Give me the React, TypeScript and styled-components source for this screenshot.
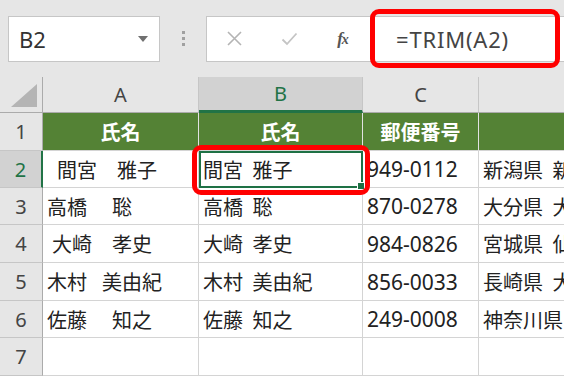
import React from 'react'
import styled, { createGlobalStyle, css } from 'styled-components'

const GlobalStyle = createGlobalStyle`
  body {
    margin: 0;
    background: #ffffff;
    font-family: "Noto Sans CJK JP", "Noto Sans", sans-serif;
    overflow: hidden;
  }
`

const Page = styled.div`
  width: 564px;
  height: 376px;
  overflow: hidden;
  background: #e6e6e6;
`

const Toolbar = styled.div`
  height: 77px;
  display: flex;
  align-items: center;
  padding-left: 8px;
  box-sizing: border-box;
`

const NameBox = styled.div`
  width: 152px;
  height: 46px;
  box-sizing: border-box;
  border: 1px solid #c6c6c6;
  background: #fff;
  display: flex;
  align-items: center;
  justify-content: space-between;
  padding: 0 11px 0 10px;
  font-family: "Noto Sans", sans-serif;
  font-size: 22px;
  color: #333;
`

const Caret = styled.span`
  width: 0;
  height: 0;
  border-left: 5px solid transparent;
  border-right: 5px solid transparent;
  border-top: 6px solid #707070;
`

const Grip = styled.div`
  width: 46px;
  display: flex;
  flex-direction: column;
  align-items: center;
  gap: 3px;
`

const GripDot = styled.span`
  width: 3px;
  height: 3px;
  background: #a0a0a0;
`

const FormulaBar = styled.div`
  flex: 1;
  height: 46px;
  box-sizing: border-box;
  border: 1px solid #c6c6c6;
  border-right: none;
  background: #fff;
  display: flex;
  align-items: center;
`

const BarButton = styled.div`
  width: 55px;
  height: 100%;
  display: flex;
  align-items: center;
  justify-content: center;
`

const Fx = styled.span`
  font-family: "Liberation Serif", serif;
  font-style: italic;
  font-weight: bold;
  font-size: 17px;
  color: #555;
  letter-spacing: -1px;
  margin-right: 4px;

  small {
    font-size: 14px;
  }
`

const FormulaInput = styled.div`
  position: relative;
  flex: 1;
  height: 100%;
  display: flex;
  align-items: center;
  padding-left: 24px;
  font-family: "Noto Sans", sans-serif;
  font-size: 22px;
  letter-spacing: 0.8px;
  color: #444;
`

const Highlight = styled.div<{ $top: number; $left: number; $w: number; $h: number }>`
  position: absolute;
  top: ${p => p.$top}px;
  left: ${p => p.$left}px;
  width: ${p => p.$w}px;
  height: ${p => p.$h}px;
  box-sizing: border-box;
  border: 5px solid #ff0000;
  border-radius: 9px;
  z-index: 5;
  pointer-events: none;
`

const Sheet = styled.div`
  display: grid;
  grid-template-columns: 43px 156px 164px 116px 260px;
  grid-template-rows: 36px 38px 37px 37px 38px 38px 37px 38px;
  background: #fff;
`

const Corner = styled.div`
  background: #e6e6e6;
  border-right: 1px solid #ababab;
  border-bottom: 1px solid #ababab;
  display: flex;
  align-items: flex-end;
  justify-content: flex-end;
  padding: 0 5px 5px 0;
`

const ColHeader = styled.div<{ $selected?: boolean }>`
  background: #e6e6e6;
  border-right: 1px solid #c6c6c6;
  border-bottom: 1px solid #ababab;
  display: flex;
  align-items: center;
  justify-content: center;
  font-size: 20px;
  color: #444;
  font-family: "Noto Sans", sans-serif;
  ${p =>
    p.$selected &&
    css`
      background: #d2d2d2;
      color: #217346;
      border-bottom: 3px solid #217346;
    `}
`

const RowHeader = styled.div<{ $selected?: boolean }>`
  background: #e6e6e6;
  border-right: 1px solid #ababab;
  border-bottom: 1px solid #c6c6c6;
  display: flex;
  align-items: center;
  justify-content: center;
  font-size: 20px;
  color: #444;
  font-family: "Noto Sans", sans-serif;
  ${p =>
    p.$selected &&
    css`
      background: #d2d2d2;
      color: #217346;
      border-right: 2px solid #217346;
    `}
`

const Cell = styled.div<{ $head?: boolean; $active?: boolean; $code?: boolean }>`
  position: relative;
  box-sizing: border-box;
  border-right: 1px solid #d4d4d4;
  border-bottom: 1px solid #d4d4d4;
  display: flex;
  align-items: center;
  padding-left: 4px;
  font-size: 20px;
  color: #222;
  white-space: pre;
  word-spacing: 5px;
  ${p =>
    p.$code &&
    css`
      font-family: "Noto Sans", "Noto Sans CJK JP", sans-serif;
      font-size: 21px;
    `}
  ${p =>
    p.$head &&
    css`
      background: #548235;
      color: #fff;
      font-family: "Noto Sans CJK JP", sans-serif;
      font-size: 20px;
      font-weight: bold;
      justify-content: center;
      padding-left: 0;
      border-right-color: #e2e2e2;
    `}
  ${p =>
    p.$active &&
    css`
      outline: 2px solid #1e7145;
      outline-offset: -2px;
    `}
`

const FillHandle = styled.span`
  position: absolute;
  right: -3px;
  bottom: -3px;
  width: 6px;
  height: 6px;
  background: #1e7145;
  border: 1px solid #fff;
  z-index: 3;
`

const cols = ['A', 'B', 'C', 'D']
const headers = ['氏名', '氏名', '郵便番号', '']

const rows = [
  ['\u2002間宮\u3000雅子', '間宮 雅子', '949-0112', '新潟県 新潟市'],
  ['高橋\u3000\u2005聡', '高橋 聡', '870-0278', '大分県 大分市'],
  ['\u2005大崎\u3000孝史', '大崎 孝史', '984-0826', '宮城県 仙台市'],
  ['木村\u2002\u2005美由紀', '木村 美由紀', '856-0033', '長崎県 大村市'],
  ['佐藤\u3000\u2005知之', '佐藤 知之', '249-0008', '神奈川県 逗子市'],
]

export default function App() {
  return (
    <Page>
      <GlobalStyle />
      <Toolbar>
        <NameBox>
          <span>B2</span>
          <Caret />
        </NameBox>
        <Grip>
          <GripDot />
          <GripDot />
          <GripDot />
        </Grip>
        <FormulaBar>
          <BarButton>
            <svg width="17" height="17" viewBox="0 0 17 17">
              <path d="M2 2 L15 15 M15 2 L2 15" stroke="#b4b4b4" strokeWidth="1.6" fill="none" />
            </svg>
          </BarButton>
          <BarButton>
            <svg width="17" height="14" viewBox="0 0 17 14">
              <path d="M1.5 7.5 L6 12 L15.5 1.5" stroke="#c4c4c4" strokeWidth="1.8" fill="none" />
            </svg>
          </BarButton>
          <BarButton>
            <Fx>
              f<small>x</small>
            </Fx>
          </BarButton>
          <FormulaInput>
            =TRIM(A2)
            <Highlight $top={-8} $left={-2} $w={190} $h={59} />
          </FormulaInput>
        </FormulaBar>
      </Toolbar>

      <Sheet>
        <Corner>
          <svg width="26" height="23" viewBox="0 0 26 23">
            <polygon points="26,0 26,23 0,23" fill="#b4b4b4" />
          </svg>
        </Corner>
        {cols.map(c => (
          <ColHeader key={c} $selected={c === 'B'}>
            {c === 'D' ? '' : c}
          </ColHeader>
        ))}

        <RowHeader>1</RowHeader>
        {headers.map((h, i) => (
          <Cell key={i} $head>
            {h}
          </Cell>
        ))}

        {rows.map((r, ri) => (
          <React.Fragment key={ri}>
            <RowHeader $selected={ri === 0}>{ri + 2}</RowHeader>
            {r.map((v, ci) => {
              const active = ri === 0 && ci === 1
              return (
                <Cell key={ci} $active={active} $code={ci === 2}>
                  {v}
                  {active && (
                    <>
                      <FillHandle />
                      <Highlight $top={-6} $left={-7} $w={178} $h={50} />
                    </>
                  )}
                </Cell>
              )
            })}
          </React.Fragment>
        ))}

        <RowHeader>7</RowHeader>
        <Cell />
        <Cell />
        <Cell />
        <Cell />
      </Sheet>
    </Page>
  )
}
